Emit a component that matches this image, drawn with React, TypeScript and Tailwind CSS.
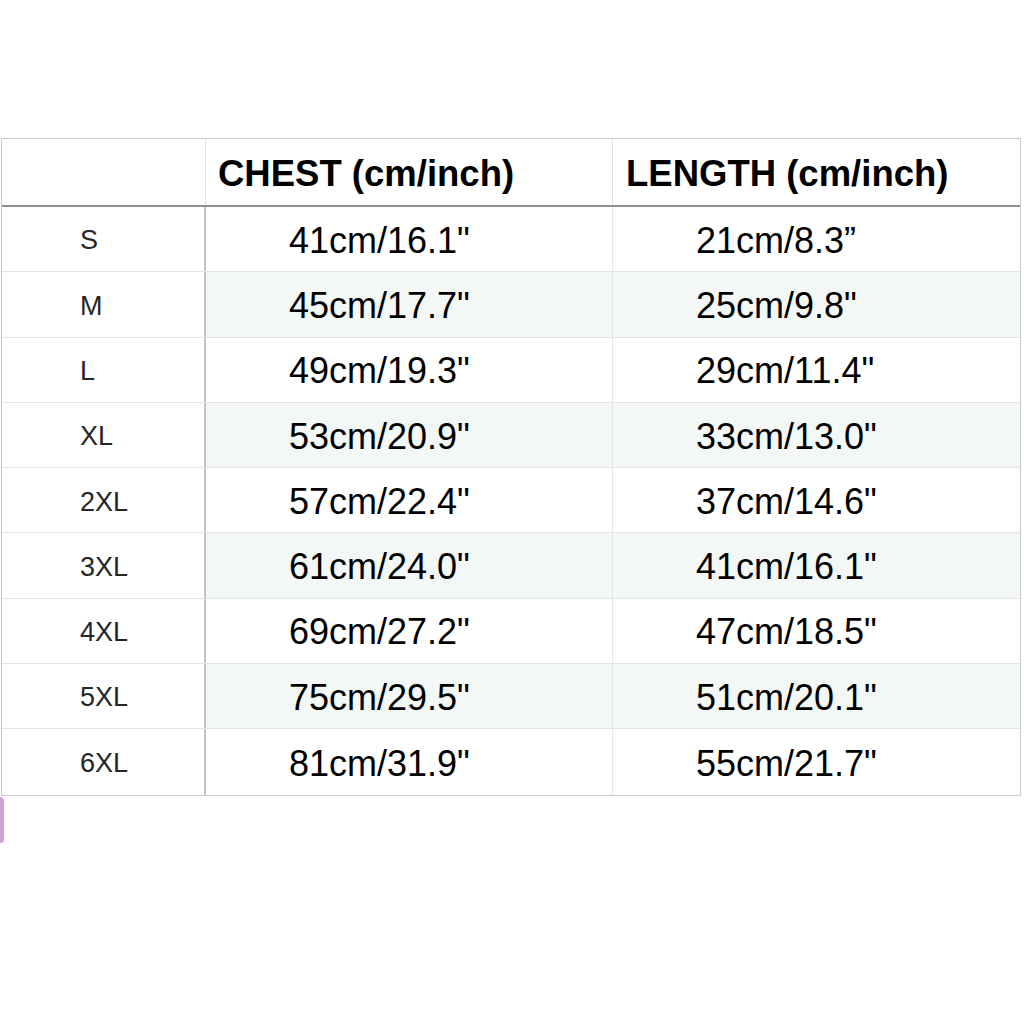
const rows: [string, string, string][] = [
  ["S", "41cm/16.1\"", "21cm/8.3\u201D"],
  ["M", "45cm/17.7\"", "25cm/9.8\""],
  ["L", "49cm/19.3\"", "29cm/11.4\""],
  ["XL", "53cm/20.9\"", "33cm/13.0\""],
  ["2XL", "57cm/22.4\"", "37cm/14.6\""],
  ["3XL", "61cm/24.0\"", "41cm/16.1\""],
  ["4XL", "69cm/27.2\"", "47cm/18.5\""],
  ["5XL", "75cm/29.5\"", "51cm/20.1\""],
  ["6XL", "81cm/31.9\"", "55cm/21.7\""],
];

export default function App() {
  return (
    <div
      className="w-[1024px] h-[1024px] bg-white pt-[138px] pl-[1px]"
      style={{ fontFamily: '"Liberation Sans", Arial, sans-serif' }}
    >
      <div className="w-[1020px] border-[1.5px] border-[#c9c9c9]">
        <div className="grid grid-cols-[204px_407px_1fr] h-[68px] border-b-2 border-[#8f8f8f]">
          <div className="border-r border-[#e2e2e2]" />
          <div className="flex items-center pl-[12px] pt-[4px] border-r border-[#e2e2e2] text-[36.5px] font-bold text-black">
            CHEST (cm/inch)
          </div>
          <div className="flex items-center pl-[13px] pt-[4px] text-[36.5px] font-bold text-black">
            LENGTH (cm/inch)
          </div>
        </div>
        {rows.map(([size, chest, length], i) => (
          <div
            key={size}
            className={`grid grid-cols-[204px_407px_1fr] h-[65.3px] ${
              i < rows.length - 1 ? "border-b border-[#e4e4e4]" : ""
            }`}
          >
            <div className="flex items-center pl-[78px] pt-[3px] border-r-2 border-[#c4c4c4] bg-white text-[27px] text-[#262626]">
              {size}
            </div>
            <div
              className={`flex items-center pl-[83px] pt-[3px] border-r border-[#e6e6e6] text-[36px] text-black ${
                i % 2 === 1 ? "bg-[#f3f7f6]" : "bg-white"
              }`}
            >
              {chest}
            </div>
            <div
              className={`flex items-center pl-[83px] pt-[3px] text-[36px] text-black ${
                i % 2 === 1 ? "bg-[#f3f7f6]" : "bg-white"
              }`}
            >
              {length}
            </div>
          </div>
        ))}
      </div>
      <div className="mt-[1px] -ml-[1px] w-[4px] h-[46px] rounded-r-sm bg-[#d29ed6]" />
    </div>
  );
}
